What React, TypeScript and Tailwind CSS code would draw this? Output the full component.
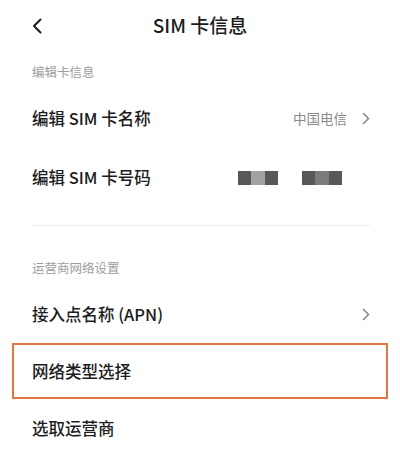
const font = "font-['Noto_Sans_CJK_SC','Noto_Sans',sans-serif]";

function Chevron() {
  return (
    <svg width="8" height="13" viewBox="0 0 8 13" fill="none" className="shrink-0">
      <path d="M1.5 1.5 L6.5 6.5 L1.5 11.5" stroke="#8a8a8a" strokeWidth="1.6" strokeLinecap="round" strokeLinejoin="round" />
    </svg>
  );
}

function SectionLabel({ children }: { children: React.ReactNode }) {
  return (
    <div className="h-[39px] pt-[14px] pl-[32px] text-[12.5px] leading-[16px] text-[#9c9c9c]">
      {children}
    </div>
  );
}

function Row({ label, right }: { label: string; right?: React.ReactNode }) {
  return (
    <div className="flex h-[59px] items-center justify-between pl-[32px] pr-[30px]">
      <span className="text-[16.5px] font-medium text-[#1c1c1c]">{label}</span>
      {right}
    </div>
  );
}

function Masked({ mid }: { mid: string }) {
  return (
    <div className="flex h-[14px] w-[40px] blur-[0.4px]">
      <div className="flex-1 bg-[#585858]" />
      <div className="flex-1" style={{ background: mid }} />
      <div className="flex-1 bg-[#585858]" />
    </div>
  );
}

export default function App() {
  return (
    <div className={`${font} h-[449px] w-[400px] overflow-hidden bg-white`}>
      <div className="relative flex h-[50px] items-center justify-center">
        <svg width="10" height="16" viewBox="0 0 10 16" fill="none" className="absolute left-[32px] top-[18px]">
          <path d="M8.5 1.5 L2 8 L8.5 14.5" stroke="#1c1c1c" strokeWidth="2" strokeLinecap="round" strokeLinejoin="round" />
        </svg>
        <h1 className="text-[19px] font-medium text-[#1c1c1c]">SIM 卡信息</h1>
      </div>

      <SectionLabel>编辑卡信息</SectionLabel>
      <Row
        label="编辑 SIM 卡名称"
        right={
          <div className="flex items-center gap-[15px]">
            <span className="text-[13.5px] text-[#8a8a8a]">中国电信</span>
            <Chevron />
          </div>
        }
      />
      <div className="flex h-[59px] items-center justify-between pl-[32px] pr-[58px]">
        <span className="text-[16.5px] font-medium text-[#1c1c1c]">编辑 SIM 卡号码</span>
        <div className="flex gap-[24px]">
          <Masked mid="#a2a2a2" />
          <Masked mid="#7c7c7c" />
        </div>
      </div>

      <div className="ml-[32px] mr-[30px] mt-[18px] h-px bg-[#ededed]" />

      <div className="pt-[20px]">
        <SectionLabel>运营商网络设置</SectionLabel>
      </div>
      <div className="flex h-[58px] items-center justify-between pl-[32px] pr-[30px]">
        <span className="text-[16.5px] font-medium text-[#1c1c1c]">接入点名称 (APN)</span>
        <Chevron />
      </div>
      <div className="mx-[12px] flex h-[56px] items-center border-2 border-[#e0773f] pl-[18px]">
        <span className="text-[16.5px] font-medium text-[#1c1c1c]">网络类型选择</span>
      </div>
      <Row label="选取运营商" />
    </div>
  );
}
